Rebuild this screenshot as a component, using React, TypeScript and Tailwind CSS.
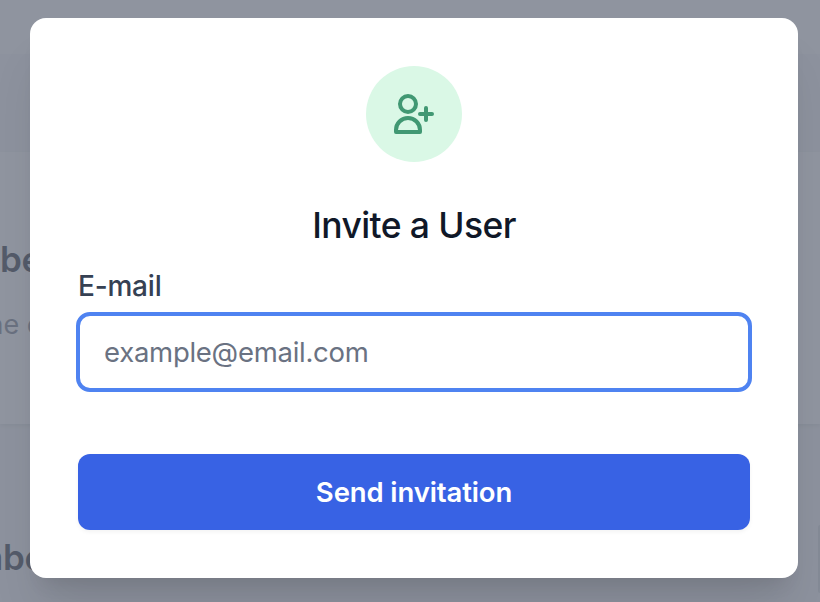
function UserAddIcon() {
  return (
    <svg className="size-12 text-[#419873]" fill="none" viewBox="0 0 24 24" stroke="currentColor" strokeWidth={2} strokeLinecap="round" strokeLinejoin="round" aria-hidden="true">
      <path d="M18 9v3m0 0v3m0-3h3m-3 0h-3m-2-5a4 4 0 11-8 0 4 4 0 018 0zM3 20a6 6 0 0112 0v1H3v-1z" />
    </svg>
  );
}

function PageBehind() {
  return (
    <div className="flex h-full flex-col bg-gray-100">
      <div className="h-[54px] bg-gray-50" />
      <div className="h-[98px] bg-gray-100" />
      <div className="h-[272px] overflow-hidden bg-white pt-[83px] whitespace-nowrap shadow-[0_2px_4px_rgba(0,0,0,0.1)]">
        <h2 className="flex w-[42px] justify-end text-[35px] leading-[48px] font-semibold tracking-[-0.3px] text-gray-900">Membe</h2>
        <p className="mt-[22px] flex w-[43px] justify-end text-[27px] leading-10 text-gray-500">the o</p>
      </div>
      <div className="flex justify-between whitespace-nowrap">
        <h2 className="mt-[109px] flex w-[45px] justify-end text-[35px] leading-[48px] font-semibold tracking-[-0.3px] text-gray-900">Membe</h2>
        <div className="mt-[101px] h-[68px] w-[2px] rounded-l-xl bg-gray-300" />
      </div>
    </div>
  );
}

export default function App() {
  return (
    <div className="relative h-[602px] w-[820px] overflow-hidden font-['Inter','Liberation_Sans',sans-serif]">
      <PageBehind />
      <div className="absolute inset-0 bg-[#6b7180]/75 pt-[18px] pl-[30px]">
        <div role="dialog" className="flex h-[560px] w-[768px] flex-col rounded-2xl bg-white p-12 shadow-[0_40px_50px_-10px_rgba(0,0,0,0.1),0_16px_20px_-12px_rgba(0,0,0,0.1)]">
          <div className="mx-auto flex size-24 shrink-0 items-center justify-center rounded-full bg-[#daf8e6]">
            <UserAddIcon />
          </div>
          <h3 className="mt-10 text-center text-[35.5px] leading-[48px] font-[530] tracking-[-0.6px] text-gray-900">
            <span>Invite a User</span>
          </h3>
          <label htmlFor="email" className="mt-4 text-[28px] leading-10 font-[540] tracking-[-0.2px] text-gray-700">
            <span>E-mail</span>
          </label>
          <input id="email" type="email" placeholder="example@email.com" className="-mx-0.5 mt-[6px] h-20 shrink-0 rounded-[14px] border-4 border-[#4f83f1] bg-white px-6 text-[27.5px] tracking-[-0.27px] text-gray-700 outline-none placeholder:text-gray-500" />
          <button type="button" className="mt-[62px] h-[76px] shrink-0 rounded-xl bg-[#3862e4] text-[27.5px] leading-10 font-semibold tracking-[-0.12px] text-white shadow-[0_2px_4px_rgba(0,0,0,0.05)]">
            <span>Send invitation</span>
          </button>
        </div>
      </div>
    </div>
  );
}
